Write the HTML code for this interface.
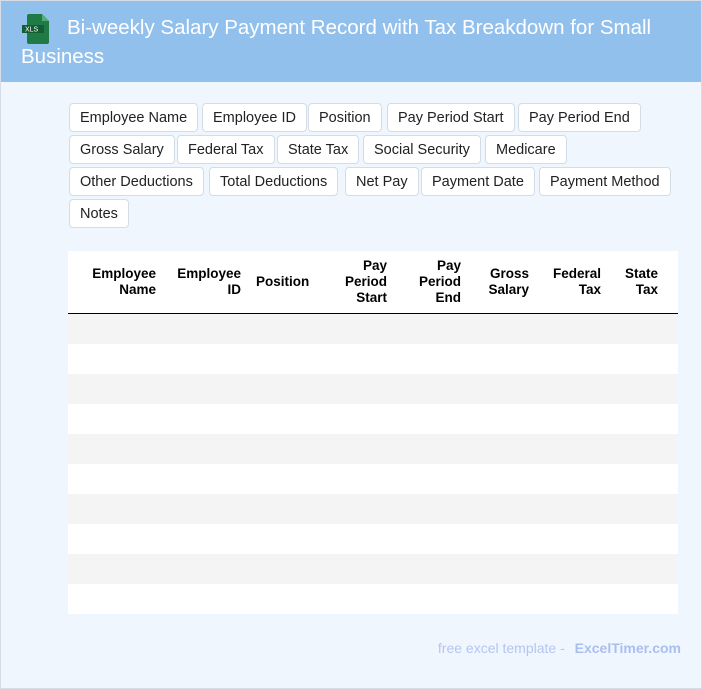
<!DOCTYPE html>
<html><head><meta charset="utf-8"><style>
*{margin:0;padding:0;box-sizing:border-box}
body{width:702px;height:689px;background:#f0f6fe;font-family:"Liberation Sans",sans-serif;position:relative;overflow:hidden}
.frame{position:absolute;left:0;top:0;width:702px;height:689px;border:1px solid #d6dde6;pointer-events:none}
.hdr{position:absolute;left:0;top:0;width:702px;height:82px;background:#92c0ec}
.hdr h1{position:absolute;left:21px;top:13px;width:660px;font-weight:normal;font-size:20.5px;line-height:29px;color:#fff;text-indent:46px}
.ico{position:absolute;left:21px;top:13px;width:30px;height:32px}
.tag{position:absolute;height:29px;border:1px solid #d4dce6;border-radius:4px;background:#fff;font-size:14.5px;line-height:29px;padding:0 10px;color:#222}
.tbl{position:absolute;left:68px;top:251px;width:610px;height:363px;background:#fff;overflow:hidden}
.th{position:absolute;font-weight:bold;font-size:13.5px;line-height:16px;text-align:right;color:#000}
.line{position:absolute;left:0;top:62px;width:610px;height:2px;background:#000}
.row{position:absolute;left:0;width:610px;height:30px}
.ft{position:absolute;right:21px;top:640px;font-size:14px;color:#b3c6f0}
.ft b{color:#a9bff0;margin-left:6px}
</style></head><body>
<div class="hdr">
<svg class="ico" viewBox="0 0 30 32"><path d="M8 1h13l7 7v21a2 2 0 0 1-2 2H8a2 2 0 0 1-2-2V3a2 2 0 0 1 2-2z" fill="#1f7a45"/><path d="M21 1v7h7z" fill="#4caf73"/><rect x="1" y="12" width="22" height="8" fill="#145c33"/><text x="4" y="18.7" font-size="7" fill="#fff" font-family="Liberation Sans">XLS</text></svg>
<h1>Bi-weekly Salary Payment Record with Tax Breakdown for Small Business</h1>
</div>
<div class="tag" style="left:69px;top:103px">Employee Name</div>
<div class="tag" style="left:202px;top:103px">Employee ID</div>
<div class="tag" style="left:308px;top:103px">Position</div>
<div class="tag" style="left:387px;top:103px">Pay Period Start</div>
<div class="tag" style="left:518px;top:103px">Pay Period End</div>
<div class="tag" style="left:69px;top:135px">Gross Salary</div>
<div class="tag" style="left:177px;top:135px">Federal Tax</div>
<div class="tag" style="left:277px;top:135px">State Tax</div>
<div class="tag" style="left:363px;top:135px">Social Security</div>
<div class="tag" style="left:485px;top:135px">Medicare</div>
<div class="tag" style="left:69px;top:167px">Other Deductions</div>
<div class="tag" style="left:209px;top:167px">Total Deductions</div>
<div class="tag" style="left:345px;top:167px">Net Pay</div>
<div class="tag" style="left:421px;top:167px">Payment Date</div>
<div class="tag" style="left:539px;top:167px">Payment Method</div>
<div class="tag" style="left:69px;top:199px">Notes</div>
<div class="tbl">
<div class="th" style="right:522px;top:15px">Employee<br>Name</div>
<div class="th" style="right:437px;top:15px">Employee<br>ID</div>
<div class="th" style="left:188px;top:23px">Position</div>
<div class="th" style="right:291px;top:7px">Pay<br>Period<br>Start</div>
<div class="th" style="right:217px;top:7px">Pay<br>Period<br>End</div>
<div class="th" style="right:149px;top:15px">Gross<br>Salary</div>
<div class="th" style="right:77px;top:15px">Federal<br>Tax</div>
<div class="th" style="right:20px;top:15px">State<br>Tax</div>
<div class="line"></div>
<div class="row" style="top:63px;background:#f4f4f4"></div>
<div class="row" style="top:123px;background:#f4f4f4"></div>
<div class="row" style="top:183px;background:#f4f4f4"></div>
<div class="row" style="top:243px;background:#f4f4f4"></div>
<div class="row" style="top:303px;background:#f4f4f4"></div>
</div>
<div class="ft">free excel template - <b>ExcelTimer.com</b></div>
<div class="frame"></div>
</body></html>
